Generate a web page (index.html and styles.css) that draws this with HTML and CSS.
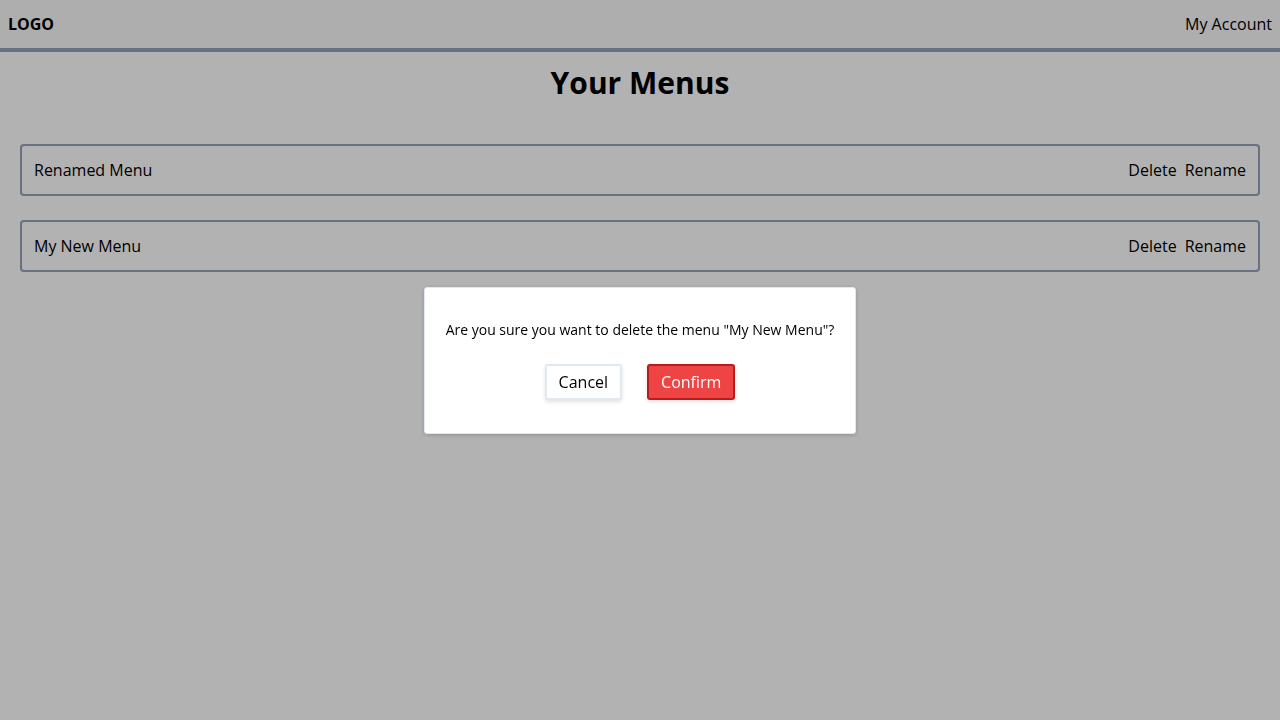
FILE: index.html
```html
<!DOCTYPE html>
<html lang="en">
<head>
<meta charset="utf-8">
<title>Your Menus</title>
<link rel="stylesheet" href="styles.css">
</head>
<body>
<header class="topbar">
  <div class="logo">LOGO</div>
  <a class="account" href="#">My Account</a>
</header>
<main class="content">
  <h1 class="title">Your Menus</h1>
  <ul class="menu-list">
    <li class="menu-row">
      <span class="menu-name">Renamed Menu</span>
      <span class="menu-actions"><button class="link-btn">Delete</button><button class="link-btn">Rename</button></span>
    </li>
    <li class="menu-row">
      <span class="menu-name">My New Menu</span>
      <span class="menu-actions"><button class="link-btn">Delete</button><button class="link-btn">Rename</button></span>
    </li>
  </ul>
</main>
<div class="overlay">
  <div class="dialog" role="dialog">
    <p class="dialog-text">Are you sure you want to delete the menu "My New Menu"?</p>
    <div class="dialog-buttons">
      <button class="btn btn-cancel">Cancel</button>
      <button class="btn btn-confirm">Confirm</button>
    </div>
  </div>
</div>
</body>
</html>
```
FILE: styles.css
```css
* { box-sizing: border-box; }
html, body { margin: 0; padding: 0; }
body {
  font-family: "Open Sans", "Noto Sans", sans-serif;
  font-size: 16px;
  line-height: 24px;
  color: #000;
  background: #ffffff;
  height: 720px;
}
.topbar {
  height: 52px;
  background: #f9fafb;
  border-bottom: 4px solid #94a3b8;
  display: flex;
  align-items: center;
  justify-content: space-between;
  padding: 0 8px;
}
.logo { font-weight: 700; }
.account { color: #000; text-decoration: none; }
.content { padding: 0 20px; }
.title {
  margin: 13px 0 43px;
  font-size: 30px;
  line-height: 36px;
  font-weight: 700;
  text-align: center;
}
.menu-list {
  list-style: none;
  margin: 0;
  padding: 0;
  display: flex;
  flex-direction: column;
  gap: 24px;
}
.menu-row {
  border: 2px solid #94a3b8;
  border-radius: 4px;
  padding: 12px;
  display: flex;
  justify-content: space-between;
  align-items: center;
}
.menu-actions { display: flex; gap: 8px; }
.link-btn {
  font: inherit;
  background: none;
  border: 0;
  padding: 0;
  color: #000;
  cursor: pointer;
}
.overlay {
  position: fixed;
  inset: 0;
  background: rgba(0, 0, 0, 0.3);
  display: flex;
  align-items: center;
  justify-content: center;
}
.dialog {
  background: #fff;
  border: 1px solid #e2e8f0;
  border-radius: 3px;
  box-shadow: 0 1px 4px rgba(0, 0, 0, 0.2);
  padding: 32px 21px 33px;
  text-align: center;
}
.dialog-text {
  margin: 0 0 24px;
  font-size: 14px;
  line-height: 20px;
}
.dialog-buttons {
  display: flex;
  justify-content: center;
  gap: 25px;
}
.btn {
  font: inherit;
  height: 36px;
  padding: 0 12px;
  border-radius: 3px;
  cursor: pointer;
}
.btn-cancel {
  background: #fff;
  color: #000;
  border: 2px solid #e2e8f0;
  box-shadow: 0 2px 4px rgba(0, 0, 0, 0.12);
}
.btn-confirm {
  background: #ef4444;
  color: #fff;
  border: 2px solid #b91c1c;
  box-shadow: 0 2px 4px rgba(0, 0, 0, 0.12);
}
```
